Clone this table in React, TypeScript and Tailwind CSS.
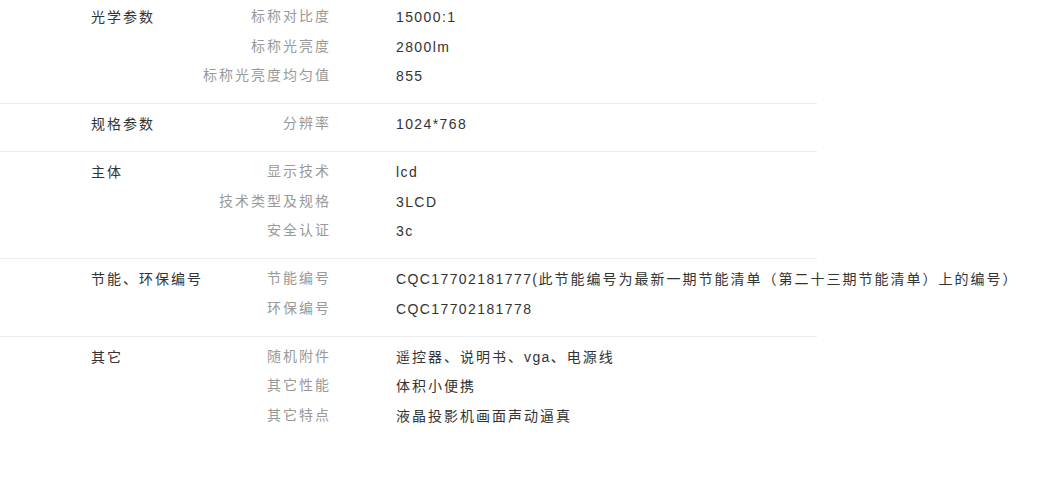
import React from "react";

type Section = { title: string; rows: [string, string][] };

const sections: Section[] = [
  {
    title: "光学参数",
    rows: [
      ["标称对比度", "15000:1"],
      ["标称光亮度", "2800lm"],
      ["标称光亮度均匀值", "855"],
    ],
  },
  { title: "规格参数", rows: [["分辨率", "1024*768"]] },
  {
    title: "主体",
    rows: [
      ["显示技术", "lcd"],
      ["技术类型及规格", "3LCD"],
      ["安全认证", "3c"],
    ],
  },
  {
    title: "节能、环保编号",
    rows: [
      ["节能编号", "CQC17702181777(此节能编号为最新一期节能清单（第二十三期节能清单）上的编号）"],
      ["环保编号", "CQC17702181778"],
    ],
  },
  {
    title: "其它",
    rows: [
      ["随机附件", "遥控器、说明书、vga、电源线"],
      ["其它性能", "体积小便携"],
      ["其它特点", "液晶投影机画面声动逼真"],
    ],
  },
];

function Mixed({ text }: { text: string }) {
  const parts = text.match(/[\u3000-\u303f\u4e00-\u9fff\uff00-\uffef]+|[^\u3000-\u303f\u4e00-\u9fff\uff00-\uffef]+/g) || [];
  return (
    <>
      {parts.map((p, i) =>
        /[\u3000-\u303f\u4e00-\u9fff\uff00-\uffef]/.test(p) ? (
          <span key={i} className="tracking-[2px]">{p}</span>
        ) : (
          <span key={i} className="tracking-[1.4px]">{p}</span>
        )
      )}
    </>
  );
}

export default function App() {
  return (
    <div
      className="w-[1052px] h-[495px] bg-white overflow-hidden text-[14px]"
      style={{ fontFamily: '"Liberation Sans", Arial, "Noto Sans CJK SC", sans-serif' }}
    >
      <div className="w-[817px]">
        {sections.map((s, i) => (
          <div
            key={s.title}
            className={`flex pl-[91px] pb-[11.5px] ${i === 0 ? "pt-[3px]" : "pt-[6px] border-t border-[#ececec]"}`}
          >
            <div className="w-[111px] shrink-0 whitespace-nowrap leading-[29.5px] text-[#333]">
              <Mixed text={s.title} />
            </div>
            <div className="flex flex-col">
              {s.rows.map(([k, v]) => (
                <div key={k} className="flex leading-[29.5px]">
                  <div className="w-[129px] shrink-0 whitespace-nowrap text-right text-[#999] -translate-y-[1px]">
                    <Mixed text={k} />
                  </div>
                  <div className="ml-[65px] whitespace-nowrap text-[#333]">
                    <Mixed text={v} />
                  </div>
                </div>
              ))}
            </div>
          </div>
        ))}
      </div>
    </div>
  );
}
